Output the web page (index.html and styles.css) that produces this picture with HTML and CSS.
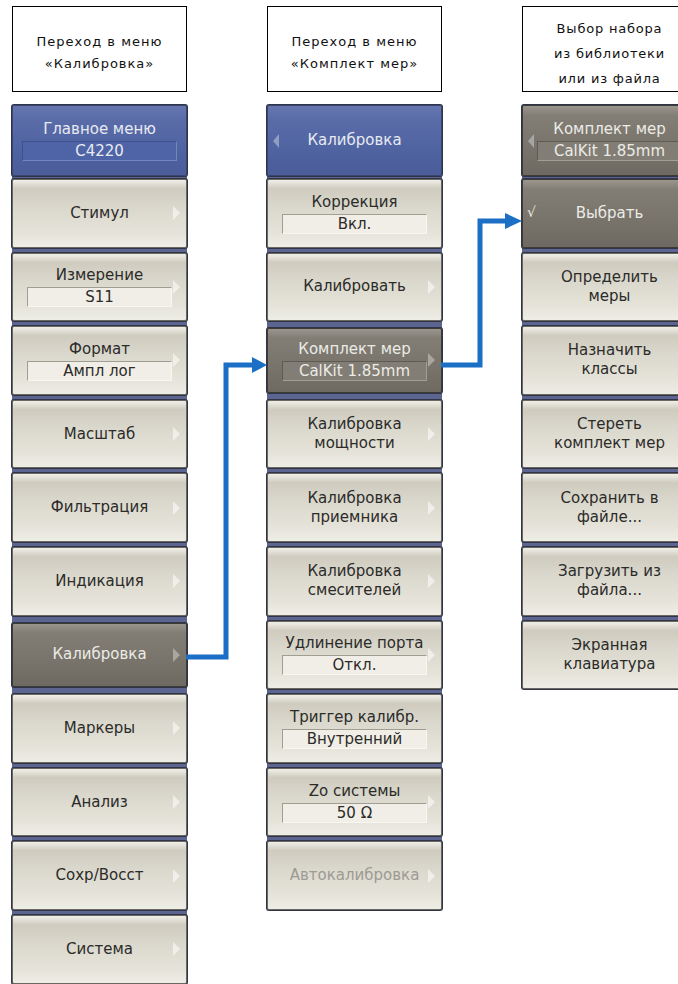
FILE: index.html
```html
<!DOCTYPE html>
<html>
<head>
<meta charset="utf-8">
<title>Меню калибровки</title>
<link rel="stylesheet" href="styles.css">
</head>
<body>
<div class="page">

  <div class="col">
    <div class="note">Переход в меню<br>«Калибровка»</div>
    <div class="menu">
      <div class="btn head blue">
        <span class="label">Главное меню</span>
        <span class="val">С4220</span>
      </div>
      <div class="btn more"><span class="label">Стимул</span></div>
      <div class="btn more">
        <span class="label">Измерение</span>
        <span class="val">S11</span>
      </div>
      <div class="btn more">
        <span class="label">Формат</span>
        <span class="val">Ампл лог</span>
      </div>
      <div class="btn more"><span class="label">Масштаб</span></div>
      <div class="btn more"><span class="label">Фильтрация</span></div>
      <div class="btn more"><span class="label">Индикация</span></div>
      <div class="btn more sel"><span class="label">Калибровка</span></div>
      <div class="btn more"><span class="label">Маркеры</span></div>
      <div class="btn more"><span class="label">Анализ</span></div>
      <div class="btn more"><span class="label">Сохр/Восст</span></div>
      <div class="btn more"><span class="label">Система</span></div>
    </div>
  </div>

  <div class="col">
    <div class="note">Переход в меню<br>«Комплект мер»</div>
    <div class="menu">
      <div class="btn head blue back"><span class="label">Калибровка</span></div>
      <div class="btn">
        <span class="label">Коррекция</span>
        <span class="val">Вкл.</span>
      </div>
      <div class="btn more"><span class="label">Калибровать</span></div>
      <div class="btn more sel">
        <span class="label">Комплект мер</span>
        <span class="val">CalKit 1.85mm</span>
      </div>
      <div class="btn more"><span class="label">Калибровка<br>мощности</span></div>
      <div class="btn more"><span class="label">Калибровка<br>приемника</span></div>
      <div class="btn more"><span class="label">Калибровка<br>смесителей</span></div>
      <div class="btn more">
        <span class="label">Удлинение порта</span>
        <span class="val">Откл.</span>
      </div>
      <div class="btn">
        <span class="label">Триггер калибр.</span>
        <span class="val">Внутренний</span>
      </div>
      <div class="btn more">
        <span class="label">Zo системы</span>
        <span class="val">50 Ω</span>
      </div>
      <div class="btn more off"><span class="label">Автокалибровка</span></div>
    </div>
  </div>

  <div class="col">
    <div class="note three">Выбор набора<br>из библиотеки<br>или из файла</div>
    <div class="menu">
      <div class="btn head dark back">
        <span class="label">Комплект мер</span>
        <span class="val">CalKit 1.85mm</span>
      </div>
      <div class="btn dark"><span class="check">√</span><span class="label">Выбрать</span></div>
      <div class="btn"><span class="label">Определить<br>меры</span></div>
      <div class="btn"><span class="label">Назначить<br>классы</span></div>
      <div class="btn"><span class="label">Стереть<br>комплект мер</span></div>
      <div class="btn"><span class="label">Сохранить в<br>файле...</span></div>
      <div class="btn"><span class="label">Загрузить из<br>файла...</span></div>
      <div class="btn"><span class="label">Экранная<br>клавиатура</span></div>
    </div>
  </div>

</div>

<svg class="links" width="678" height="984" viewBox="0 0 678 984">
  <polyline points="186,657 226,657 226,365 254,365" fill="none" stroke="#1b6fc4" stroke-width="5"/>
  <polygon points="252,357 267,365 252,373" fill="#1b6fc4"/>
  <polyline points="441,365 480,365 480,221 507,221" fill="none" stroke="#1b6fc4" stroke-width="5"/>
  <polygon points="505,213 522,221 505,229" fill="#1b6fc4"/>
</svg>
</body>
</html>
```

FILE: styles.css
```css
html, body { height: 984px; overflow: hidden; }
body {
  margin: 0;
  background: #fff;
  font-family: "DejaVu Sans", sans-serif;
  position: relative;
}
.page {
  display: flex;
  gap: 80px;
  padding: 6px 0 0 12px;
  width: 678px;
  box-sizing: border-box;
  overflow: hidden;
}
.col {
  width: 175px;
  flex-shrink: 0;
}
.note {
  height: 86px;
  box-sizing: border-box;
  border: 1px solid #000;
  padding-top: 7px;
  display: flex;
  align-items: center;
  justify-content: center;
  text-align: center;
  font-size: 13px;
  letter-spacing: 1px;
  line-height: 22px;
  color: #111;
}
.note.three { line-height: 25px; padding-top: 8px; letter-spacing: 0.8px; }

.menu {
  margin-top: 13px;
  display: flex;
  flex-direction: column;
  gap: 5px;
  background: #5b6590;
}
.btn {
  position: relative;
  height: 68.6px;
  box-sizing: border-box;
  flex-shrink: 0;
  border-radius: 2px;
  box-shadow: 0 0 0 1px #2f3448;
  border: 1px solid #6a685f;
  background: linear-gradient(to bottom, #f0efe8 0%, #cfcbbf 13%, #dad7cc 40%, #e6e4da 80%, #eeede6 100%);
  display: flex;
  flex-direction: column;
  align-items: center;
  justify-content: center;
  color: #2b2b29;
  font-size: 15px;
  text-align: center;
}
.label { line-height: 19px; }
.val {
  align-self: stretch;
  margin: 2px 14px 0;
  height: 20px;
  box-sizing: border-box;
  line-height: 18px;
  background: #f0eee6;
  border: 1px solid;
  border-color: #a09d93 #f8f7f2 #f8f7f2 #a09d93;
}
.btn.head {
  height: 71px;
  margin-bottom: -2px;
}
.btn.blue {
  border-color: #3a4670;
  background: linear-gradient(to bottom, #6576b0 0%, #5a6ca8 20%, #5064a2 60%, #4a5c99 100%);
  color: #e8eaf2;
}
.btn.blue .val {
  margin: 2px 9px 0;
  background: #4f64a6;
  border-color: #3f5090 #7486c0 #7486c0 #3f5090;
}
.btn.sel, .btn.dark {
  border-color: #3d3b36;
  background: linear-gradient(to bottom, #9a968d 0%, #827e75 14%, #79756c 55%, #6e6a62 100%);
  color: #ecebe6;
}
.btn.sel {
  height: 64.6px;
  margin: 2px 0;
}
.btn.sel .val, .btn.dark .val {
  background: #827e75;
  border-color: #5f5b54 #a29e95 #a29e95 #5f5b54;
}
.btn.off { color: #9c9a92; }

.btn.more::after {
  content: "";
  position: absolute;
  right: 6px;
  top: 50%;
  margin-top: -7px;
  border-left: 7px solid rgba(255, 255, 255, 0.55);
  border-top: 7px solid transparent;
  border-bottom: 7px solid transparent;
}
.btn.sel.more::after { border-left-color: rgba(210, 206, 198, 0.55); }
.btn.back::before {
  content: "";
  position: absolute;
  left: 5px;
  top: 50%;
  margin-top: -7px;
  border-right: 6px solid rgba(220, 224, 236, 0.45);
  border-top: 7px solid transparent;
  border-bottom: 7px solid transparent;
}
.check {
  position: absolute;
  left: 4px;
  top: 50%;
  margin-top: -9px;
  font-size: 14px;
  color: #eeeae2;
}

.links {
  position: absolute;
  left: 0;
  top: 0;
  pointer-events: none;
}
```
